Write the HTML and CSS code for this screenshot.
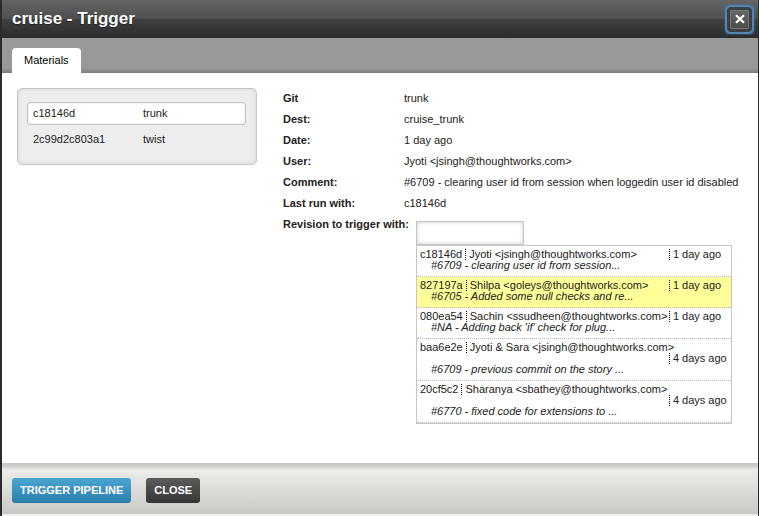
FILE: index.html
```html
<!DOCTYPE html>
<html lang="en">
<head>
<meta charset="utf-8">
<title>cruise - Trigger</title>
<link rel="stylesheet" href="styles.css">
</head>
<body>
<div class="dialog" role="dialog" aria-labelledby="dialog-title">
  <header class="dialog-header">
    <h1 id="dialog-title">cruise - Trigger</h1>
    <button type="button" class="close-icon" aria-label="Close dialog">
      <svg viewBox="0 0 10 10" width="10" height="10" aria-hidden="true"><path d="M1 1.2 9 8.8M9 1.2 1 8.8" fill="none" stroke="#fff" stroke-width="2.2"/></svg>
    </button>
  </header>
  <nav class="tabs"><a class="tab" href="#materials">Materials</a></nav>
  <main class="content" id="materials">
    <ul class="materials">
      <li class="material selected"><span>c18146d</span><span>trunk</span></li>
      <li class="material"><span>2c99d2c803a1</span><span>twist</span></li>
    </ul>
    <section class="details">
      <dl class="facts">
        <div><dt>Git</dt><dd>trunk</dd></div>
        <div><dt>Dest:</dt><dd>cruise_trunk</dd></div>
        <div><dt>Date:</dt><dd>1 day ago</dd></div>
        <div><dt>User:</dt><dd>Jyoti &lt;jsingh@thoughtworks.com&gt;</dd></div>
        <div><dt>Comment:</dt><dd>#6709 - clearing user id from session when loggedin user id disabled</dd></div>
        <div><dt>Last run with:</dt><dd>c18146d</dd></div>
      </dl>
      <div class="revision-field">
        <label for="revision">Revision to trigger with:</label>
        <div class="autocomplete">
          <input type="text" id="revision" autocomplete="off">
          <ul class="results">
            <li><div class="commit"><span class="rev">c18146d</span><span class="user">Jyoti &lt;jsingh@thoughtworks.com&gt;</span><span class="time">1 day ago</span></div><p>#6709 - clearing user id from session...</p></li>
            <li class="active"><div class="commit"><span class="rev">827197a</span><span class="user">Shilpa &lt;goleys@thoughtworks.com&gt;</span><span class="time">1 day ago</span></div><p>#6705 - Added some null checks and re...</p></li>
            <li><div class="commit"><span class="rev">080ea54</span><span class="user">Sachin &lt;ssudheen@thoughtworks.com&gt;</span><span class="time">1 day ago</span></div><p>#NA - Adding back 'if' check for plug...</p></li>
            <li class="stacked"><div class="commit"><span class="rev">baa6e2e</span><span class="user">Jyoti &amp; Sara &lt;jsingh@thoughtworks.com&gt;</span><span class="time">4 days ago</span></div><p>#6709 - previous commit on the story ...</p></li>
            <li class="stacked"><div class="commit"><span class="rev">20cf5c2</span><span class="user">Sharanya &lt;sbathey@thoughtworks.com&gt;</span><span class="time">4 days ago</span></div><p>#6770 - fixed code for extensions to ...</p></li>
          </ul>
        </div>
      </div>
    </section>
  </main>
  <footer class="actions">
    <button type="button" class="button primary">TRIGGER PIPELINE</button>
    <button type="button" class="button">CLOSE</button>
  </footer>
</div>
</body>
</html>
```
FILE: styles.css
```css
* {
  box-sizing: border-box;
}

body {
  margin: 0;
  font: 11px/21px "Liberation Sans", Arial, sans-serif;
  color: #222;
  background: #eeefea;
}

ul, dl, dd, p, h1 {
  margin: 0;
  padding: 0;
  list-style: none;
}

.dialog {
  display: flex;
  flex-direction: column;
  min-height: 100vh;
  background: #fff;
  border-left: 2px solid #2b2b2d;
  border-right: 1px solid #2b2b2d;
}

.dialog-header {
  display: flex;
  align-items: center;
  justify-content: space-between;
  height: 38px;
  padding: 0 9px 0 10px;
  background: linear-gradient(#646464, #4f4f4f 50%, #404040 50%, #2b2b2b);
}

.dialog-header h1 {
  font-size: 17px;
  line-height: 38px;
  color: #fff;
  text-shadow: 0 1px 1px #222;
}

.close-icon {
  display: flex;
  align-items: center;
  justify-content: center;
  width: 19px;
  height: 19px;
  padding: 0;
  border: 1px solid #777;
  background: linear-gradient(#666, #4c4c4c);
  outline: 2px solid #5085b4;
  outline-offset: 3px;
  border-radius: 1px;
  box-shadow: 0 0 0 3px #3c4045, 0 0 2px 5px #4478a6;
}

.tabs {
  display: flex;
  height: 35px;
  padding: 10px 10px 0;
  background: linear-gradient(#999, #999 86%, #7d7d7d);
}

.tab {
  padding: 0 12px;
  line-height: 25px;
  color: #000;
  text-decoration: none;
  background: #fff;
  border-radius: 4px 4px 0 0;
}

.content {
  display: flex;
  flex: 1;
  align-items: flex-start;
  gap: 26px;
  padding: 15px;
}

.materials {
  flex: none;
  width: 240px;
  padding: 13px 10px 13px 9px;
  background: #ededed;
  border: 1px solid #c6c6c6;
  border-radius: 5px;
  box-shadow: inset 0 0 4px #d4d4d4;
}

.material {
  display: grid;
  grid-template-columns: 110px 1fr;
  padding: 0 5px;
  border: 1px solid transparent;
}

.material.selected {
  margin-bottom: 3px;
  background: #fff;
  border-color: #c6c6c6;
  border-radius: 3px;
  box-shadow: inset 0 0 2px #ccc;
}

.details {
  flex: 1;
  min-width: 0;
}

.facts div {
  display: grid;
  grid-template-columns: 121px 1fr;
}

.facts dt,
.revision-field label {
  font-weight: bold;
}

.facts dd {
  white-space: nowrap;
}

.revision-field {
  display: flex;
  gap: 7px;
}

.revision-field label {
  flex: none;
}

.autocomplete {
  flex: none;
  width: 316px;
  padding-top: 7px;
}

.autocomplete input {
  display: block;
  width: 108px;
  height: 24px;
  padding: 4px;
  font: inherit;
  border: 1px solid #c4c4c4;
  box-shadow: inset 0 0 4px #ccc;
  outline: 0;
}

.results {
  line-height: 11px;
  background: #fff;
  border: 1px solid #c6c6c6;
}

.results li {
  padding: 3px 0 5px 3px;
  border-bottom: 1px dotted #bbb;
}

.results .active {
  background: #ff9;
}

.commit {
  display: flex;
  flex-wrap: wrap;
}

.rev {
  padding-right: 3px;
}

.user {
  padding: 0 1px 0 3px;
  border-left: 1px dotted #000;
}

.stacked .user {
  margin-right: 8px;
}

.time {
  width: 62px;
  margin-left: auto;
  padding-left: 3px;
  border-left: 1px dotted #000;
}

.results p {
  padding-left: 11px;
  font-style: italic;
}

.actions {
  display: flex;
  gap: 15px;
  height: 53px;
  padding: 15px 10px 0;
  background: linear-gradient(#c4c4c1, #cececb 3px, #ecede8 7px, #c8c9c4 51px, #eeefea 51px);
}

.button {
  height: 25px;
  padding: 0 8px;
  font: bold 11px/25px "Liberation Sans", Arial, sans-serif;
  color: #fff;
  background: linear-gradient(#5c5c5c, #353535);
  border: 0;
  border-radius: 3px;
}

.button.primary {
  background: linear-gradient(#4aa5d2, #2a7eab);
}
```
